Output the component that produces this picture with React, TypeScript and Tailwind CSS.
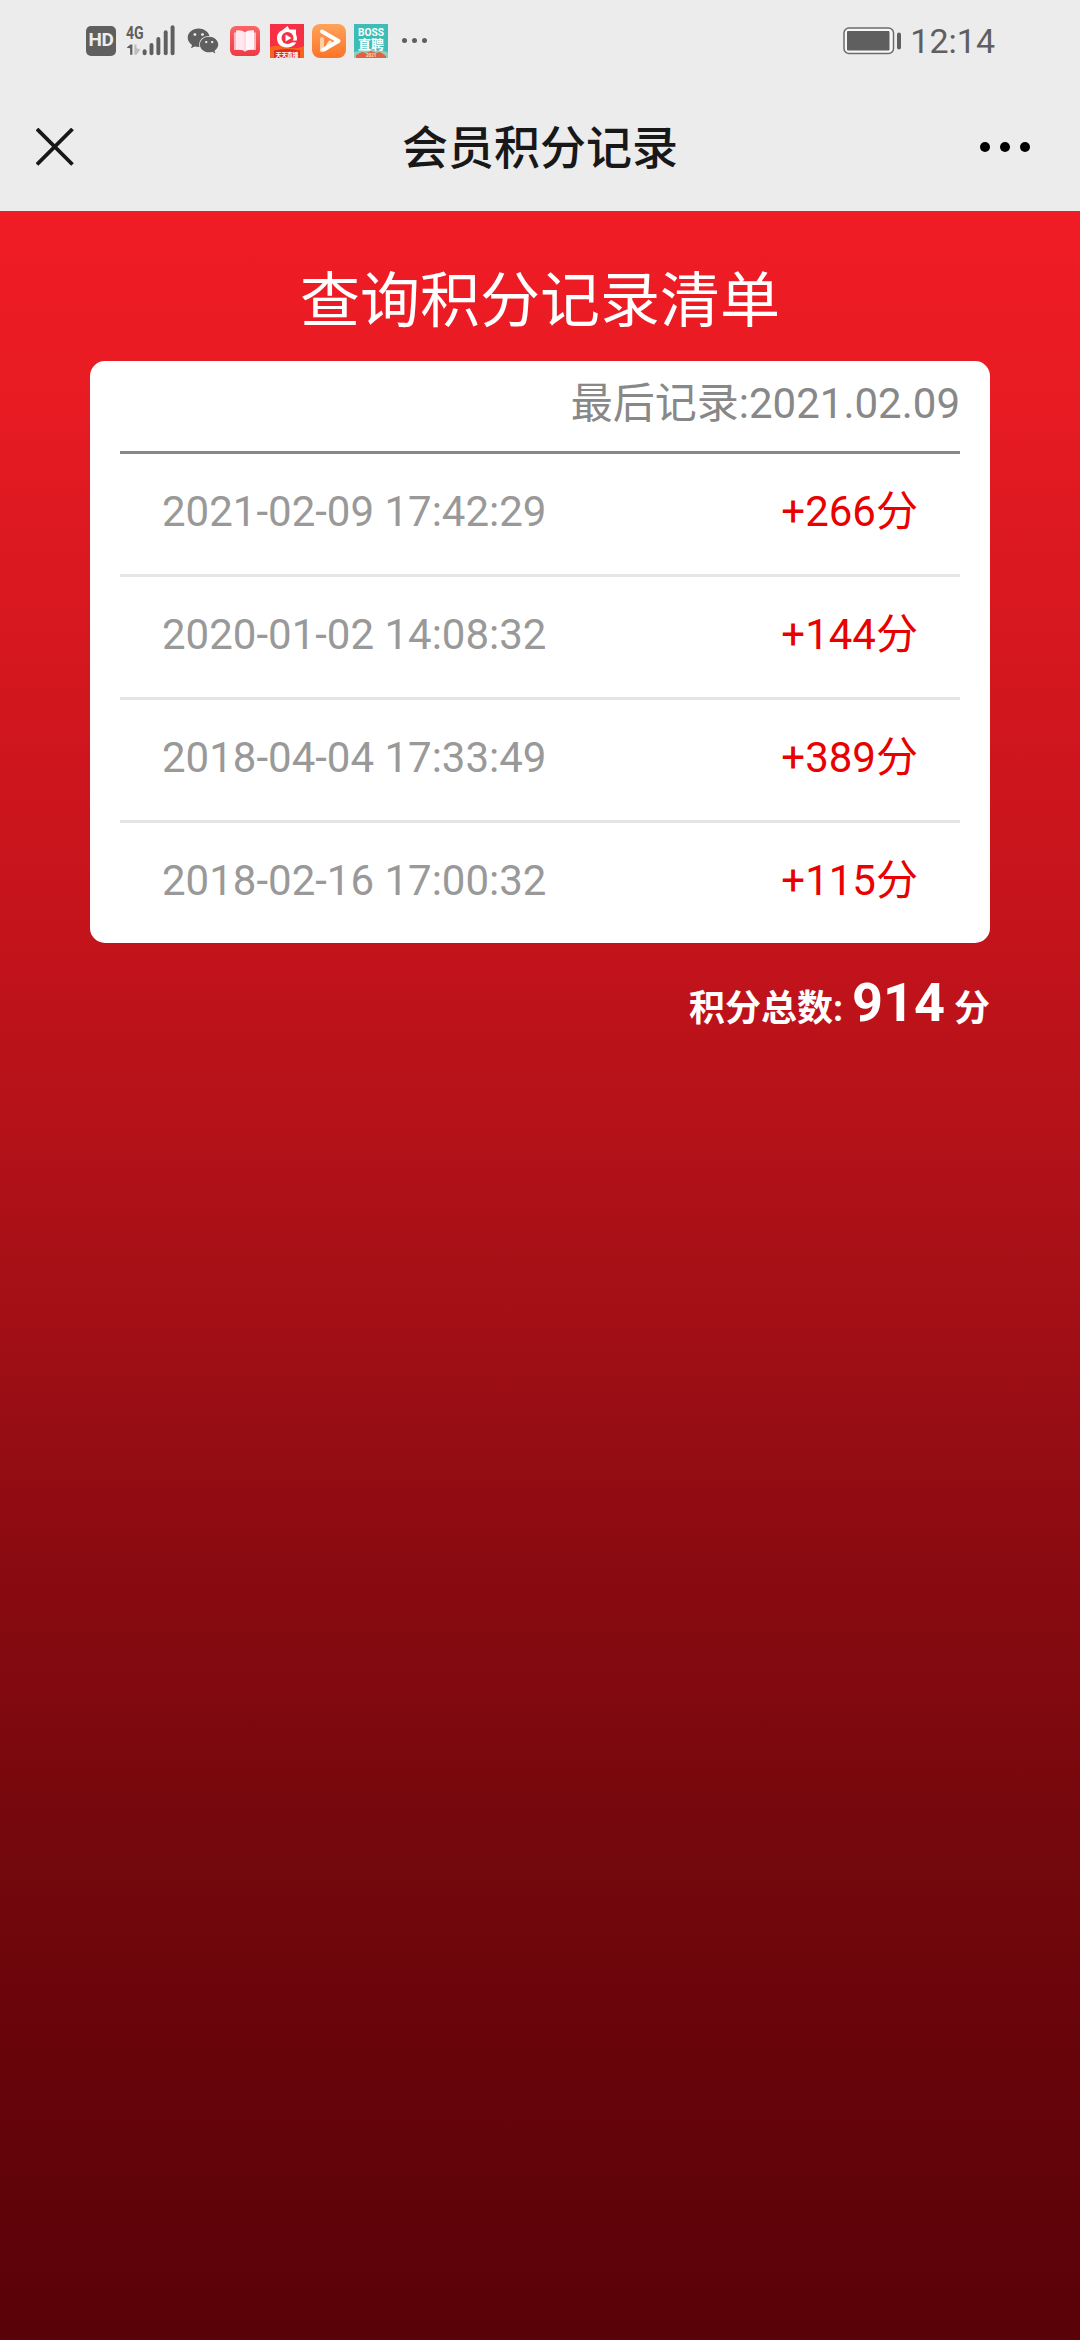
import { FaWeixin } from "react-icons/fa";

type PointRecord = {
  time: string;
  points: string;
};

const records: PointRecord[] = [
  { time: "2021-02-09 17:42:29", points: "+266" },
  { time: "2020-01-02 14:08:32", points: "+144" },
  { time: "2018-04-04 17:33:49", points: "+389" },
  { time: "2018-02-16 17:00:32", points: "+115" },
];

const SignalIcon = () => (
  <svg width="52" height="34" viewBox="0 0 52 34" fill="#5f5f5f">
    <text x="0" y="14.500" fontSize="18" fontWeight="700" fontFamily="Roboto" textLength="18" lengthAdjust="spacingAndGlyphs">4G</text>
    <path d="M0.500 24l4-3.500H6.500V31H4.200V24.500z" />
    <path d="M8.500 20.500h2.200v4l4 1-4 5.500H8.500z" fill="#bdbdbd" />
    <rect x="17" y="25.500" width="4" height="6" rx="2" />
    <rect x="24" y="19" width="4" height="12.500" rx="2" />
    <rect x="31" y="13" width="4" height="18.500" rx="2" />
    <rect x="38.500" y="6" width="4" height="25.500" rx="2" />
    <rect x="45.500" y="1" width="4" height="30.500" rx="2" />
  </svg>
);

const BookIcon = () => (
  <svg width="30" height="30" viewBox="0 0 30 30">
    <defs>
      <linearGradient id="book" x1="0" y1="0" x2="0" y2="1">
        <stop offset="0" stopColor="#fb6565" />
        <stop offset="1" stopColor="#ee3b45" />
      </linearGradient>
    </defs>
    <rect width="30" height="30" rx="6" fill="url(#book)" />
    <path d="M4 6.500h22v17.500H4z" fill="#fbb9c4" />
    <path d="M6 4.500c4-.5 7 .5 9 2V25.500c-2-1.500-5-2-9-2z" fill="#ffe6ef" />
    <path d="M24 4.500c-4-.5-7 .5-9 2V25.500c2-1.500 5-2 9-2z" fill="#fff5f9" />
    <path d="M15 6.500v19" stroke="#f9c6d2" />
  </svg>
);

const LiveIcon = () => (
  <svg width="34" height="34" viewBox="0 0 34 34">
    <rect width="34" height="34" fill="#f62f45" />
    <path d="M0 23q8-3 17 0t17-1v12H0z" fill="#f9631f" />
    <path d="M4 26.500q13-3 26 0V34H4z" fill="#dc2c1d" />
    <path d="M7 14c0-4 2-6.500 5-7.500L17.500 2l2 3.500H26V10l1 4c0 6-4 9.500-10 9.500S7 20 7 14z" fill="#fff" />
    <circle cx="17.500" cy="14" r="6" fill="#f62f45" />
    <path d="M22 17.500h6" stroke="#f62f45" strokeWidth="1.800" />
    <path d="M15.500 10.500l6 3.500-6 3.500z" fill="#fff" />
    <text x="5.500" y="32.500" fontSize="6" fontWeight="700" fill="#fff" fontFamily="Noto Sans CJK SC" textLength="23">天天直播</text>
  </svg>
);

const PlayerIcon = () => (
  <svg width="34" height="34" viewBox="0 0 34 34">
    <defs>
      <linearGradient id="player" x1="0" y1="0" x2="0" y2="1">
        <stop offset="0" stopColor="#ffa25a" />
        <stop offset="1" stopColor="#fb7428" />
      </linearGradient>
    </defs>
    <rect width="34" height="34" rx="8" fill="url(#player)" />
    <path d="M10 15v10" stroke="#ffd0a8" strokeWidth="4" strokeLinecap="round" />
    <path d="M10 26l5-2.500 3-5" fill="none" stroke="#ffe3cc" strokeWidth="4" strokeLinecap="round" />
    <path d="M10 7.500l16.500 9.500L12 25.500" fill="none" stroke="#fff" strokeWidth="4" strokeLinecap="round" strokeLinejoin="round" />
  </svg>
);

const BossIcon = () => (
  <svg width="34" height="34" viewBox="0 0 34 34">
    <rect width="34" height="34" fill="#3dbdb5" />
    <path d="M0 28q17-5 34 0v6H0z" fill="#8ccfc2" />
    <path d="M2 31l6-3 4 1 5-2 5 2 4-1 6 4v2H2z" fill="#e0623f" />
    <text x="4" y="11.500" fontSize="11" fontWeight="700" fill="#fff" fontFamily="Roboto" textLength="26" lengthAdjust="spacingAndGlyphs">BOSS</text>
    <text x="4" y="24.500" fontSize="13" fontWeight="700" fill="#fff" fontFamily="Noto Sans CJK SC" textLength="26">直聘</text>
    <text x="12" y="32.500" fontSize="4.500" fontWeight="700" fill="#ffe0b8" fontFamily="Roboto">2021</text>
  </svg>
);

const BatteryIcon = () => (
  <svg width="58" height="28" viewBox="0 0 58 28">
    <rect x="1" y="1" width="49.500" height="25.500" rx="5" fill="#f6f6f6" stroke="#6b6b6b" strokeWidth="1.500" />
    <rect x="4" y="4" width="42.500" height="19.500" rx="1" fill="#5f5f5f" />
    <rect x="54" y="5.500" width="4" height="17" rx="2" fill="#5f5f5f" />
  </svg>
);

const StatusBar = () => (
  <div className="flex h-[81px] items-center justify-between pr-[85px] pl-[86px] text-[#5f5f5f]">
    <div className="flex items-center">
      <div className="flex h-[30px] w-[30px] items-center justify-center rounded-[5px] bg-[#5f5f5f] text-[19px] font-bold tracking-tight text-[#ececec]">
        HD
      </div>
      <div className="ml-[10px] flex w-[51px]">
        <SignalIcon />
      </div>
      <FaWeixin className="ml-[10px] h-[32px] w-[32px]" />
      <div className="ml-[11px] flex items-center gap-[8px]">
        <div className="mr-[2px]">
          <BookIcon />
        </div>
        <LiveIcon />
        <PlayerIcon />
        <BossIcon />
      </div>
      <div className="ml-[14px] flex gap-[5px]">
        <span className="h-[5px] w-[5px] rounded-full bg-[#5f5f5f]" />
        <span className="h-[5px] w-[5px] rounded-full bg-[#5f5f5f]" />
        <span className="h-[5px] w-[5px] rounded-full bg-[#5f5f5f]" />
      </div>
    </div>
    <div className="flex items-center gap-[9px]">
      <BatteryIcon />
      <span className="text-[34px] leading-none">12:14</span>
    </div>
  </div>
);

const NavBar = () => (
  <div className="flex h-[130px] items-start justify-between px-[36px] pt-[31px]">
    <div className="flex h-[70px] w-[120px] items-center">
      <svg width="38" height="38" viewBox="0 0 38 38" stroke="#181818" strokeWidth="3.800">
        <path d="M1 1l35.500 35.500M36.500 1L1 36.500" />
      </svg>
    </div>
    <h1 className="text-[46px] leading-[73px] font-medium text-[#181818]">会员积分记录</h1>
    <div className="flex h-[70px] w-[120px] items-center justify-end gap-[10px] pr-[14px]">
      <span className="h-[10px] w-[10px] rounded-full bg-black" />
      <span className="h-[10px] w-[10px] rounded-full bg-black" />
      <span className="h-[10px] w-[10px] rounded-full bg-black" />
    </div>
  </div>
);

const App = () => {
  return (
    <div className="flex h-[2340px] w-[1080px] flex-col bg-[#ececec] font-['Roboto','Noto_Sans_CJK_SC',sans-serif]">
      <StatusBar />
      <NavBar />

      <div className="flex-1 bg-[linear-gradient(180deg,#f01c25_0%,#e91b23_8%,#da1820_17%,#c3131b_34.5%,#ae1118_46.5%,#8b0b11_63%,#76080d_75.5%,#69050b_85%,#590208_100%)] px-[90px] pt-[45px]">
        <h2 className="h-[90px] text-center text-[60px] leading-[92px] text-white">查询积分记录清单</h2>

        <div className="mt-[15px] h-[582px] rounded-[15px] bg-white px-[30px] text-[42px]">
          <div className="h-[93px] border-b-[3px] border-[#888888] text-right leading-[86px] text-[#888888]">
            最后记录:2021.02.09
          </div>
          {records.map((record) => (
            <div
              key={record.time}
              className="flex h-[123px] justify-between border-b-[3px] border-[#e5e5e5] px-[42px] leading-[116px] last:border-0"
            >
              <span className="text-[#999999]">{record.time}</span>
              <span className="text-[#e90000]">{record.points}分</span>
            </div>
          ))}
        </div>

        <div className="mt-[15px] text-right text-[36px] leading-[90px] font-bold text-white">
          积分总数: <span className="text-[54px]">914</span> 分
        </div>
      </div>
    </div>
  );
};

export default App;
